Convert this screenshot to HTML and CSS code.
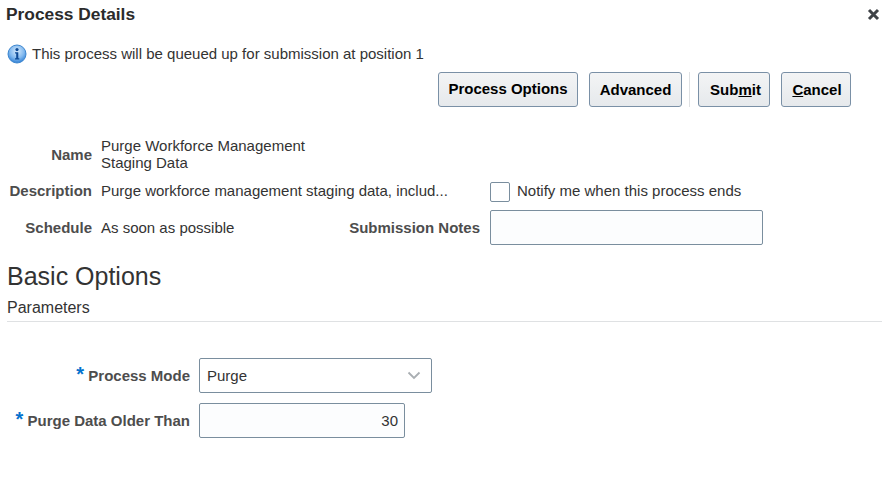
FILE: index.html
```html
<!DOCTYPE html>
<html lang="en">
<head>
<meta charset="utf-8">
<title>Process Details</title>
<link rel="stylesheet" href="styles.css">
</head>
<body>
<div class="dialog">
  <header class="title-bar">
    <h1 class="title">Process Details</h1>
    <svg class="close" width="13" height="13" viewBox="0 0 13 13"><path d="M2 2l9 9M11 2l-9 9" stroke="#3f4347" stroke-width="3"/></svg>
  </header>
  <div class="info">
    <svg class="info-icon" width="20" height="20" viewBox="0 0 20 20">
      <defs>
        <radialGradient id="ig" cx="50%" cy="35%" r="65%"><stop offset="0" stop-color="#d6eafc"/><stop offset="0.6" stop-color="#82b9ef"/><stop offset="1" stop-color="#2f7fd4"/></radialGradient>
      </defs>
      <circle cx="10" cy="10" r="9" fill="url(#ig)" stroke="#3d86cf"/>
      <circle cx="10" cy="5.6" r="1.6" fill="#0d4a96"/>
      <path d="M8 8.300h3.300v6h1v1.300H8v-1.300h1.200V9.600H8z" fill="#0d4a96"/>
    </svg>
    <span class="info-text">This process will be queued up for submission at position 1</span>
  </div>
  <div class="toolbar">
    <button class="btn btn-options">Process Options</button>
    <button class="btn btn-advanced">Advanced</button>
    <span class="sep"></span>
    <button class="btn btn-submit">Sub<u>m</u>it</button>
    <button class="btn btn-cancel"><u>C</u>ancel</button>
  </div>
  <div class="details">
    <div class="row row-name">
      <span class="label">Name</span>
      <span class="value name-value">Purge Workforce Management Staging Data</span>
    </div>
    <div class="row row-desc">
      <span class="label">Description</span>
      <span class="value desc-value">Purge workforce management staging data, includ...</span>
      <span class="check"></span>
      <span class="value">Notify me when this process ends</span>
    </div>
    <div class="row row-sched">
      <span class="label">Schedule</span>
      <span class="value sched-value">As soon as possible</span>
      <span class="label notes-label">Submission Notes</span>
      <span class="field notes"></span>
    </div>
  </div>
  <h2 class="section">Basic Options</h2>
  <div class="sub">Parameters</div>
  <div class="params">
    <div class="prow">
      <span class="plabel"><span class="req">*</span> Process Mode</span>
      <span class="field select">Purge
        <svg class="chev" width="14" height="9" viewBox="0 0 14 9"><path d="M1.5 1.5L7 7l5.500-5.500" fill="none" stroke="#a9aeb2" stroke-width="1.800"/></svg>
      </span>
    </div>
    <div class="prow">
      <span class="plabel"><span class="req">*</span> Purge Data Older Than</span>
      <span class="field number">30</span>
    </div>
  </div>
</div>
</body>
</html>
```
FILE: styles.css
```css
* { box-sizing: border-box; }
html, body { margin: 0; padding: 0; background: #fff; }
body { font-family: "Liberation Sans", Arial, sans-serif; font-size: 15px; color: #333; width: 886px; height: 502px; overflow: hidden; }
.dialog { padding: 5px 6px 0 7px; }
.title-bar { display: flex; justify-content: space-between; align-items: center; height: 18px; }
.title { margin: 0 0 0 -1px; font-size: 17.33px; font-weight: bold; color: #2b2b2b; line-height: 18px; }
.close { margin-top: 1px; }
.info { display: flex; align-items: flex-start; gap: 5px; margin-top: 21px; height: 20px; }
.info-icon { flex: none; }
.info-text { line-height: 20px; }
.toolbar { display: flex; align-items: center; margin-top: 8px; padding-left: 431px; height: 35px; }
.btn { height: 35px; padding: 0; border: 1px solid #7a90a6; border-radius: 3px; background: linear-gradient(#f3f4f5, #e6e9ec); font: bold 15px "Liberation Sans", Arial, sans-serif; color: #000; }
.btn-options { width: 140px; padding-bottom: 2px; }
.btn-advanced { width: 93px; margin-left: 11px; }
.sep { width: 1px; height: 35px; background: #dfe1e3; margin: 0 8px 0 7px; }
.btn-submit { width: 72px; padding-left: 3px; }
.btn-cancel { width: 70px; margin-left: 11px; padding-left: 2px; }
.details { margin-top: 29px; }
.row { display: flex; align-items: center; }
.label { width: 85px; text-align: right; font-weight: bold; color: #4d4d4d; flex: none; margin-right: 9px; white-space: nowrap; }
.value { color: #333; }
.row-name { height: 36px; }
.name-value { width: 230px; line-height: 17px; }
.row-desc { margin-top: 10px; height: 20px; align-items: flex-start; line-height: 18px; }
.desc-value { width: 389px; flex: none; white-space: nowrap; }
.check { width: 20px; height: 20px; border: 1px solid #7a8e9e; border-radius: 2px; flex: none; margin-right: 7px; background: #fff; }
.row-sched { margin-top: 8px; height: 35px; }
.sched-value { width: 235px; flex: none; }
.notes-label { width: 144px; margin-right: 10px; }
.field { display: flex; align-items: center; height: 35px; border: 1px solid #7a8e9e; border-radius: 2px; background: #fcfdfe; }
.notes { width: 273px; }
.section { margin: 14px 0 0; font-size: 25px; font-weight: normal; color: #333; line-height: 34px; height: 30px; }
.sub { margin-top: 10px; line-height: 18px; border-bottom: 1px solid #dfe1e3; margin-right: -2px; height: 23px; font-size: 16px; }
.params { margin-top: 36px; }
.prow { display: flex; align-items: center; gap: 9px; height: 35px; margin-bottom: 10px; }
.plabel { width: 183px; text-align: right; font-weight: bold; color: #4d4d4d; flex: none; white-space: nowrap; }
.req { color: #0572ce; font-size: 20px; line-height: 14px; }
.select { width: 233px; padding: 0 10px 0 7px; justify-content: space-between; background: #fff; }
.number { width: 206px; justify-content: flex-end; padding-right: 6px; }
```
